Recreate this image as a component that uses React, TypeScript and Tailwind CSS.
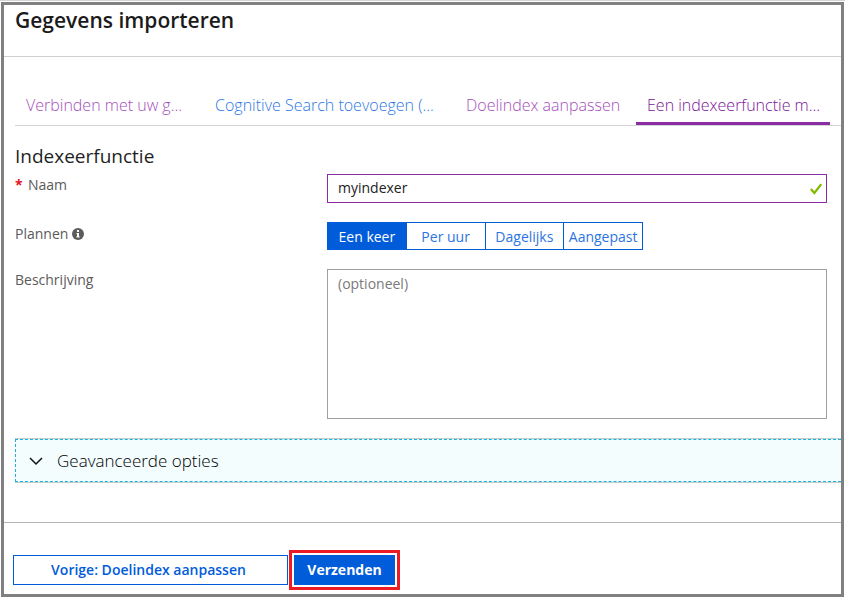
import { useState } from "react";

const tabs = [
  { label: "Verbinden met uw g...", style: "w-[189px] text-[#a550ba]" },
  { label: "Cognitive Search toevoegen (...", style: "w-[251px] text-[#2e78e4]" },
  { label: "Doelindex aanpassen", style: "w-[181px] text-[#a550ba]" },
  { label: "Een indexeerfunctie m...", style: "w-[194px] text-[#7a1499]" },
];

const schedules = ["Een keer", "Per uur", "Dagelijks", "Aangepast"];

function InfoIcon() {
  return (
    <svg viewBox="0 0 12 12" className="mt-0.5 size-3" aria-hidden="true">
      <circle cx="6" cy="6" r="6" fill="#5c5c5c" />
      <path d="M5 2h2v2H5zM4.5 5H7v3.5h.7v1H4.4v-1H5V6h-.5z" fill="#fff" />
    </svg>
  );
}

export default function App() {
  const [schedule, setSchedule] = useState("Een keer");
  const [name, setName] = useState("myindexer");
  const [step, setStep] = useState(3);

  return (
    <div className="min-h-screen border-t border-[#d4d4d4] bg-white px-px pt-px pb-0.5 font-['Open_Sans','Noto_Sans',sans-serif] text-[#5a5a5a]">
      <div className="border-[3px] border-[#808080]">
        <header className="h-[52px] border-b border-[#cfcfcf] pl-[11px]">
          <h1 className="text-[21px] leading-[30px] font-semibold text-[#1b1b1b]">Gegevens importeren</h1>
        </header>

        <main className="pl-[11px]">
          <nav className="flex border-b border-[#d4d4d4] pt-7">
            {tabs.map((tab, i) => (
              <button
                key={tab.label}
                type="button"
                onClick={() => setStep(i)}
                className={`h-10 shrink-0 border-b-[3px] pt-[3px] pl-[11px] text-left text-[16px] font-light whitespace-nowrap ${tab.style} ${i === step ? "border-[#8a2da5]" : "border-transparent"}`}
              >
                {tab.label}
              </button>
            ))}
          </nav>

          <h2 className="pt-4 text-[19px] leading-7 text-[#1f1f1f]">Indexeerfunctie</h2>

          <form className="pr-3.5">
            <div className="grid grid-cols-[312px_1fr]">
              <label htmlFor="name" className="flex pt-1 text-[14px] leading-[22px]">
                <span className="w-[13px] font-bold text-[#e81123]">*</span>Naam
              </label>
              <div className="mt-1 flex h-[29px] items-center border border-[#8a2da5] pr-1">
                <input
                  id="name"
                  value={name}
                  onChange={(e) => setName(e.target.value)}
                  className="h-full min-w-0 flex-1 pb-0.5 pl-2.5 text-[14px] text-[#222] outline-none"
                />
                <svg viewBox="0 0 12 12" className="size-3" fill="none" stroke="#7fba00" strokeWidth="2.2" aria-hidden="true">
                  <path d="M.8 6 4.4 10 11.2 1.2" />
                </svg>
              </div>
            </div>

            <div className="mt-[19px] grid grid-cols-[312px_1fr]">
              <span id="plan" className="flex h-[22px] items-center gap-1 text-[14px]">
                Plannen <InfoIcon />
              </span>
              <div role="group" aria-labelledby="plan" className="flex h-7 w-[316px] divide-x divide-[#015cda] border border-[#015cda]">
                {schedules.map((item) => (
                  <button
                    key={item}
                    type="button"
                    aria-pressed={item === schedule}
                    onClick={() => setSchedule(item)}
                    className={`flex-1 text-[14px] whitespace-nowrap ${item === schedule ? "bg-[#015cda] text-white" : "text-[#2b74e2]"}`}
                  >
                    {item}
                  </button>
                ))}
              </div>
            </div>

            <div className="mt-[19px] grid grid-cols-[312px_1fr]">
              <label htmlFor="description" className="text-[14px] leading-[22px]">
                Beschrijving
              </label>
              <textarea
                id="description"
                placeholder="(optioneel)"
                className="h-[150px] resize-none border border-[#a0a0a0] px-2.5 py-1 text-[14px] leading-5 outline-none placeholder:text-[#7a7a7a]"
              />
            </div>
          </form>

          <section className="mt-[19px] border-y border-[#c4cdcd]">
            <button
              type="button"
              className="flex h-[43px] w-full items-center gap-3.5 border border-r-0 border-dashed border-[#1cb2e0] bg-[#f3fdfe] pt-px pl-[13px] text-[17px] font-light text-black"
            >
              <svg viewBox="0 0 14 14" className="size-3.5" fill="none" stroke="#111" strokeWidth="1.5" aria-hidden="true">
                <path d="M1 4 7 10 13 4" />
              </svg>
              Geavanceerde opties
            </button>
          </section>
        </main>

        <footer className="mt-[39px] flex items-center gap-px border-t border-[#b4b4b4] pt-[27px] pb-1 pl-[9px] text-[14px] font-semibold">
          <button type="button" className="h-[30px] w-[275px] border border-[#015cda] pr-1 pb-0.5 text-[#015cda]">
            Vorige: Doelindex aanpassen
          </button>
          <div className="border-[3px] border-[#ed1c24] p-0.5">
            <button type="button" className="block h-[30px] w-[101px] bg-[#015cda] pb-0.5 font-bold text-white">
              Verzenden
            </button>
          </div>
        </footer>
      </div>
    </div>
  );
}
